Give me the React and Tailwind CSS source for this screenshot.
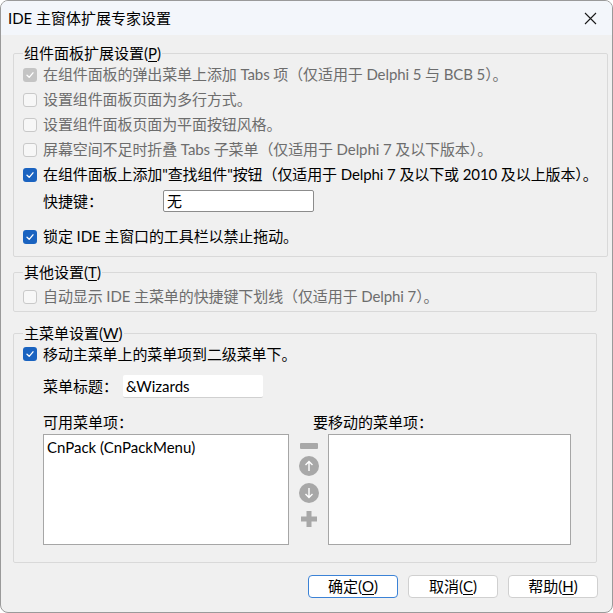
import React from 'react';

const font = { fontFamily: 'Lato, "Noto Sans CJK SC", sans-serif' };

function Mn({ children }) {
  return <span className="underline underline-offset-2">{children}</span>;
}

function Check({ checked, disabled }) {
  if (checked) {
    return (
      <span
        className={
          'inline-flex h-[14px] w-[14px] flex-shrink-0 items-center justify-center rounded-[3px] ' +
          (disabled ? 'bg-[#c4c4c4]' : 'bg-[#1a63c0]')
        }
      >
        <svg width="10" height="10" viewBox="0 0 10 10" aria-hidden>
          <polyline points="2,5.2 4.2,7.3 8,2.8" fill="none" stroke="#fff" strokeWidth="1.3" strokeLinecap="round" strokeLinejoin="round" />
        </svg>
      </span>
    );
  }
  return (
    <span className="inline-block h-[14px] w-[14px] flex-shrink-0 rounded-[3px] border border-[#c9c9c9] bg-[#f7f7f7]" />
  );
}

function CheckRow({ checked, disabled, children, className = 'h-[25px]' }) {
  return (
    <div className={'flex items-center gap-[6px] whitespace-nowrap tracking-[-0.1px] ' + className}>
      <Check checked={checked} disabled={disabled} />
      <span className={disabled ? 'text-[#6d6d6d]' : 'text-black'}>{children}</span>
    </div>
  );
}

function Group({ title, children, className = '' }) {
  return (
    <fieldset className={'mr-[15px] ml-[12px] rounded-[2px] border border-[#d9d9d9] px-[9px] ' + className}>
      <legend className="px-[1px] leading-[18px] text-black">{title}</legend>
      {children}
    </fieldset>
  );
}

export default function App() {
  return (
    <div
      style={font}
      className="flex h-[613px] w-[613px] flex-col overflow-hidden rounded-[8px] border border-[#9a9a9a] bg-[#f0f0f0] text-[15px] text-black"
    >
      <div className="flex h-[34px] flex-shrink-0 items-center justify-between bg-[#f3f6fb] pr-[15px] pl-[7px]">
        <span className="text-[15px]">IDE 主窗体扩展专家设置</span>
        <svg width="13" height="13" viewBox="0 0 13 13" aria-hidden>
          <path d="M1 1 L12 12 M12 1 L1 12" stroke="#1a1a1a" strokeWidth="1.1" />
        </svg>
      </div>

      <div className="flex flex-1 flex-col pt-[9px]">
        <Group title={<>组件面板扩展设置(<Mn>P</Mn>)</>} className="pb-[7px]">
          <CheckRow checked disabled>在组件面板的弹出菜单上添加 Tabs 项（仅适用于 Delphi 5 与 BCB 5）。</CheckRow>
          <CheckRow disabled>设置组件面板页面为多行方式。</CheckRow>
          <CheckRow disabled>设置组件面板页面为平面按钮风格。</CheckRow>
          <CheckRow disabled>屏幕空间不足时折叠 Tabs 子菜单（仅适用于 Delphi 7 及以下版本）。</CheckRow>
          <CheckRow checked>在组件面板上添加"查找组件"按钮（仅适用于 Delphi 7 及以下或 2010 及以上版本）。</CheckRow>
          <div className="mt-[2px] flex h-[24px] items-center pl-[20px]">
            <span className="w-[120px]">快捷键：</span>
            <div className="flex h-[22px] w-[151px] items-center rounded-[2px] border border-[#8c8c8c] bg-white px-[3px]">无</div>
          </div>
          <CheckRow checked className="mt-[11px] h-[25px]">锁定 IDE 主窗口的工具栏以禁止拖动。</CheckRow>
        </Group>

        <Group title={<>其他设置(<Mn>T</Mn>)</>} className="mt-[6px] pt-[3px] pb-[2px]">
          <CheckRow disabled>自动显示 IDE 主菜单的快捷键下划线（仅适用于 Delphi 7）。</CheckRow>
        </Group>

        <Group title={<>主菜单设置(<Mn>W</Mn>)</>} className="mt-[12px] pb-[17px]">
          <CheckRow checked className="h-[24px]">移动主菜单上的菜单项到二级菜单下。</CheckRow>
          <div className="mt-[9px] flex h-[23px] items-center pl-[20px]">
            <span className="w-[80px]">菜单标题：</span>
            <div className="flex h-[23px] w-[140px] items-center rounded-[2px] border-b border-[#d0d0d0] bg-white px-[3px] text-[15px]">&amp;Wizards</div>
          </div>
          <div className="mt-[14px] flex h-[20px] items-center pl-[20px]">
            <span className="w-[270px]">可用菜单项：</span>
            <span>要移动的菜单项：</span>
          </div>
          <div className="mt-[2px] flex pl-[20px]">
            <div className="h-[111px] w-[246px] border border-[#a6a6a6] bg-white px-[3px] text-[15px] leading-[24px]">
              CnPack (CnPackMenu)
            </div>
            <div className="flex w-[39px] flex-col items-center gap-[7px] pt-[9px]">
              <span className="h-[6px] w-[18px] rounded-[1px] bg-[#a8a8a8]" />
              <svg width="20" height="20" viewBox="0 0 20 20" aria-hidden>
                <circle cx="10" cy="10" r="10" fill="#a8a8a8" />
                <path d="M10 15 V5.5 M6.5 9 L10 5.5 L13.5 9" fill="none" stroke="#fff" strokeWidth="1.4" />
              </svg>
              <svg width="20" height="20" viewBox="0 0 20 20" aria-hidden>
                <circle cx="10" cy="10" r="10" fill="#a8a8a8" />
                <path d="M10 5 V14.5 M6.5 11 L10 14.5 L13.5 11" fill="none" stroke="#fff" strokeWidth="1.4" />
              </svg>
              <svg width="18" height="18" viewBox="0 0 18 18" aria-hidden>
                <path d="M9 1 V17 M1 9 H17" stroke="#a8a8a8" strokeWidth="5" />
              </svg>
            </div>
            <div className="h-[111px] w-[243px] border border-[#a6a6a6] bg-white" />
          </div>
        </Group>

        <div className="mt-[12px] flex justify-end gap-[10px] pr-[14px]">
          <button className="h-[23px] w-[90px] rounded-[4px] border border-[#3b82d6] bg-white text-[15px] leading-none">
            确定(<Mn>O</Mn>)
          </button>
          <button className="h-[23px] w-[90px] rounded-[4px] border border-[#d0d0d0] bg-white text-[15px] leading-none">
            取消(<Mn>C</Mn>)
          </button>
          <button className="h-[23px] w-[90px] rounded-[4px] border border-[#d0d0d0] bg-white text-[15px] leading-none">
            帮助(<Mn>H</Mn>)
          </button>
        </div>
      </div>
    </div>
  );
}
